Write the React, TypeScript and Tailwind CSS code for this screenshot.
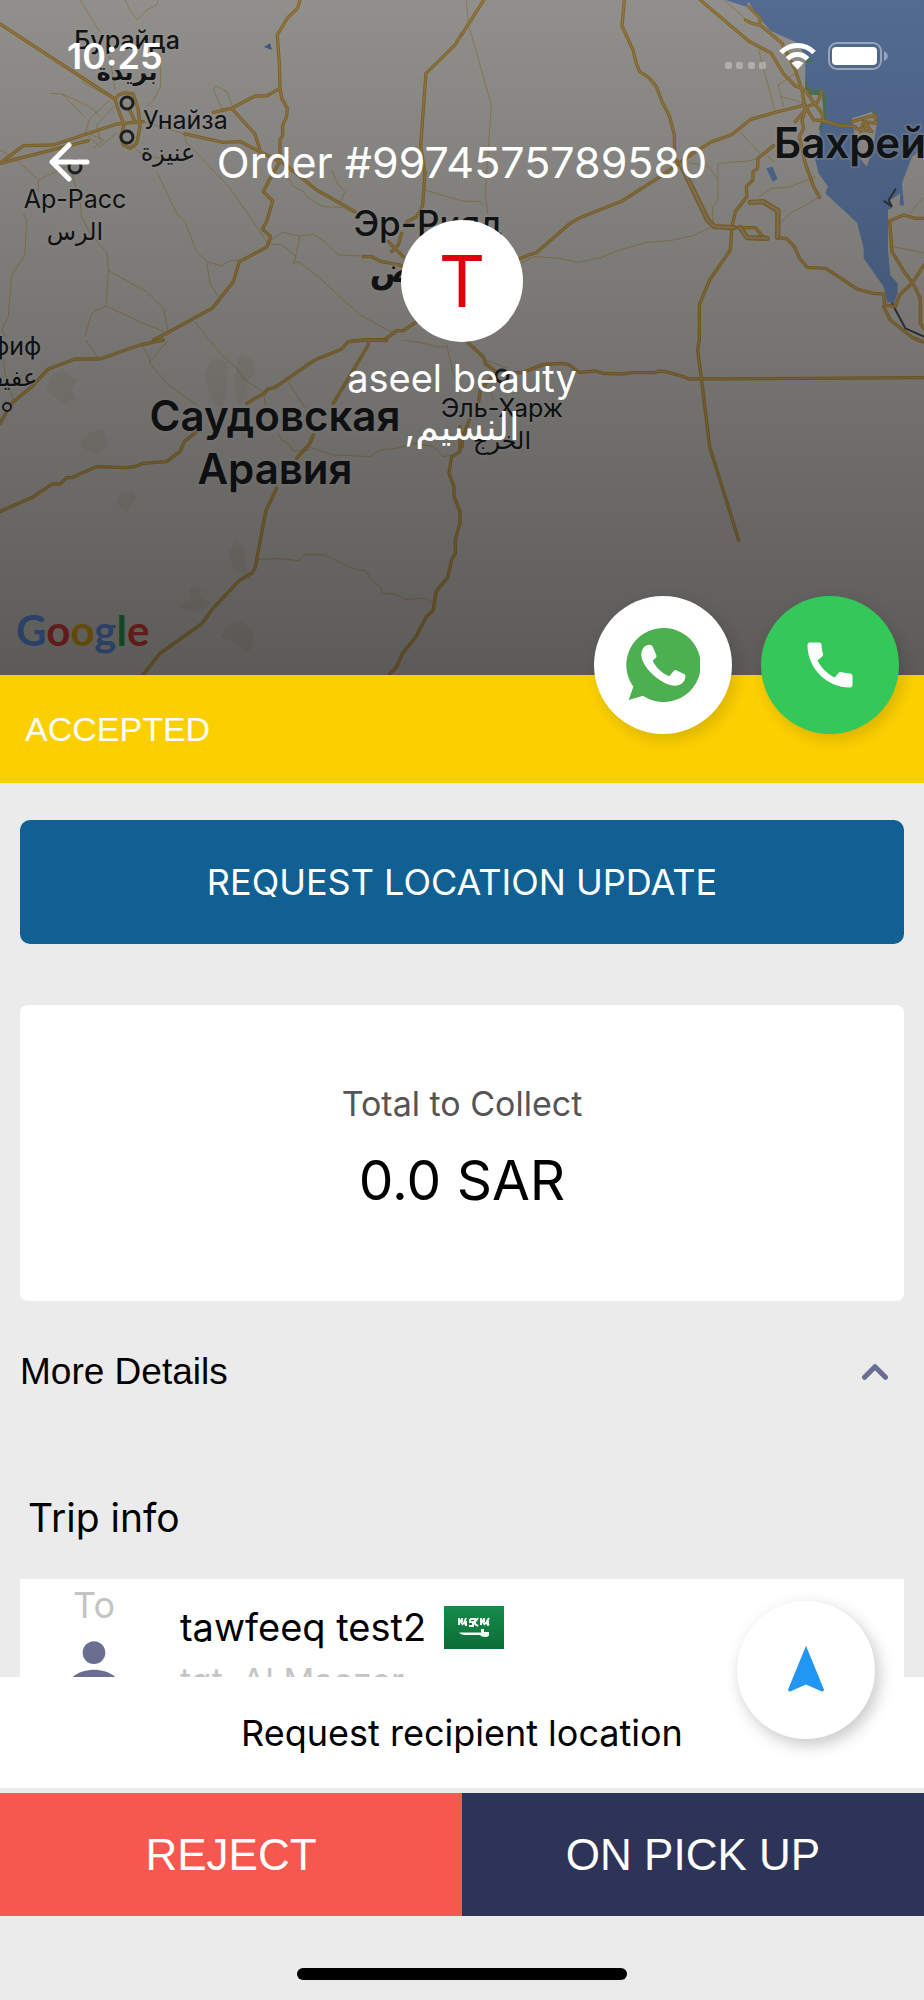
import { ChevronUp } from 'lucide-react';
import { MdCall, MdNavigation, MdPerson } from 'react-icons/md';

type Tile = { x: number; y: number; major: string[]; minor: string[] };

// Road geometry is stored per map tile, three units to a pixel.
const tiles: Tile[] = [
  {
    x: 0,
    y: 0,
    major: [
      '0,72 345,297',
      '345,297 355,285 375,278 400,282 415,330 420,380 410,430 390,445 370,435 362,410 372,375 350,315 345,297',
      '375,300 405,365',
      '900,0 893,25 863,53 832,105 838,190 840,262 845,295 862,325 860,350 848,377 848,405 840,420 840,485 805,545 790,575 818,603 800,665 787,687 812,710 800,742 718,785 700,845 637,925 500,1000 460,1020',
      '0,490 70,437 160,435 350,372 430,365',
      '0,490 265,422',
      '555,402 670,427 722,425 780,455 850,490 950,570 1065,635',
      '640,337 695,325 765,288 800,288 840,265',
      '695,325 765,402 783,460',
      '1090,770 1115,770 1145,785 1200,795 1240,820',
      '1165,725 1210,770',
      '1175,755 1195,735 1205,700',
      '1386,100 1365,135 1278,220 1262,440 1275,520 1268,618 1250,650 1220,665',
      '1250,965 1210,992 1190,992 1155,1018 1060,1022',
    ],
    minor: [
      '240,0 300,95',
      '475,0 470,15 440,30 412,60 390,30 375,0',
      '480,155 482,260 460,300 440,320',
      '150,280 187,282 265,318 280,330 300,350',
      '187,282 255,352',
      '245,245 345,300',
      '330,300 270,355 255,400 300,440 350,400',
      '340,320 290,375 300,420',
      '0,450 45,475 115,540 115,575',
      '115,540 200,500',
      '430,365 555,402',
      '280,445 310,420 265,400',
      '215,520 240,600 245,650 270,700 322,760 325,810 318,918 275,940 255,1010',
      '70,640 80,660 75,765 35,825 25,950 5,990 20,1015',
      '325,812 440,875 490,925 505,1000 430,970 318,918',
      '470,515 530,640 555,665 590,755 620,785 630,850 655,890',
      '620,785 665,798 690,782 718,780',
      '585,965 625,1018',
      '555,402 557,425 620,490 690,565 800,725',
      '812,720 848,697 900,708 940,703 975,725 1015,765 1085,768',
      '812,733 845,733 887,770 900,708',
      '887,770 880,790 895,785 960,835 1080,945 1190,1005',
      '640,270 650,258 680,275 700,325 665,325 640,270',
      '850,510 880,560 910,575 925,595 970,620 1025,622 1065,640',
      '995,510 1015,555 1035,575 1022,605 970,585',
      '1275,570 1386,603',
      '390,430 420,460 480,475',
      '330,170 345,270',
    ],
  },
  {
    x: 462,
    y: 0,
    major: [
      '65,0 0,103',
      '487,0 480,78 513,150 523,190 533,215 560,232 583,260 600,305 622,347 637,405 638,475 660,500',
      '715,0 860,123 928,160 965,222 1000,258 1030,270 1050,300 1080,340 1085,365',
      '860,20 895,55 893,75 870,70 850,60',
      '895,75 960,130 1000,210 1020,270 1030,330 1020,360 1025,385 1012,410 1030,490 1055,560 1073,592',
      '1030,315 940,337 867,358 808,405 750,425 700,455 650,490 595,530 480,603 350,655 322,672 223,758 200,765 170,778',
      '1030,320 1055,360 1085,362 1130,376 1180,380',
      '1080,272 1068,305 1040,318 1000,365',
      '1170,365 1240,345 1242,370 1205,365 1195,395 1215,375 1230,395 1180,385',
      '935,437 888,475 887,505 873,515 873,540 853,560 855,590 820,635 810,680 805,750 743,840 712,915 712,1020',
      '947,712 975,717 997,740 1013,775 1035,802 1092,805 1187,868 1235,880 1265,882 1268,915 1300,920 1313,885 1350,850 1386,795',
      '815,683 880,683 905,712',
      '1386,655 1360,655 1325,645 1283,663 1290,755 1330,820 1353,850 1375,895 1375,970 1386,985',
      '1265,920 1285,960 1350,1012 1380,1025',
    ],
    minor: [
      '13,0 20,75 88,315 70,580 77,640',
      '0,603 55,605 65,615',
      '175,790 215,770 290,775 350,787 420,772 465,752 555,727 625,722 690,708 745,683',
      '752,675 752,620 768,600 768,540 740,500 680,488',
      '768,540 768,490 860,483 890,475',
      '785,0 850,55',
      '890,150 938,330',
      '1000,220 948,255 965,320',
      '960,290 1030,310',
      '835,395 870,435 895,460',
      '890,590 930,565 980,562 1060,530',
      '955,670 985,640 1075,590',
      '1290,740 1386,758',
      '1386,590 1345,640',
      '915,465 935,485',
    ],
  },
  {
    x: 0,
    y: 340,
    major: [
      '490,0 420,15 300,57 225,57 145,87 95,140 35,190 0,250',
      '0,515 100,470 157,432 180,432 200,413 215,413 288,380 380,383 405,380 430,370 500,365 540,335 553,305 590,275',
      '740,190 793,160 803,148 825,142 945,60 1025,27 1045,5 1100,0 1160,2',
      '1105,0 1105,15 1000,190',
      '940,285 930,310 890,355',
      '830,445 798,512 765,685 755,700 720,720 635,810 605,852 480,940 430,1003',
      '1380,260 1380,335 1355,350 1347,400 1362,440 1362,468 1380,515 1380,550 1366,600 1366,640 1355,660 1343,713 1308,755 1300,810 1280,830 1245,895 1208,940 1190,980 1168,1003',
    ],
    minor: [
      '425,15 445,45 450,70 500,130 590,195',
      '450,65 505,0',
      '258,0 292,52',
      '10,55 15,100 40,180',
      '628,0 665,45 710,85 735,120 790,155 797,200',
      '865,125 915,205',
      '930,322 1000,345 1110,350 1140,330 1190,325 1240,310 1300,320 1330,350 1355,345',
      '835,280 845,300 865,310 880,333 930,330',
      '775,658 840,656 895,662 915,643 975,645 1055,685 1095,692 1118,722 1145,745 1145,760 1185,762 1215,778 1275,775 1300,790',
      '1210,0 1270,10 1310,20 1340,20',
      '1340,15 1360,100 1380,160',
    ],
  },
  {
    x: 462,
    y: 340,
    major: [
      '15,5 65,52 70,70 105,98 180,98 245,73 300,70 322,75 352,97 400,93 425,100 480,102 510,98 580,98 590,93 610,95 665,110 680,117 1386,113',
      '712,0 707,30 720,130 743,320 830,600',
      '90,110 55,150 50,185',
      '22,240 3,290 0,320',
      '1360,-4 1386,6',
    ],
    minor: ['70,60 135,85', '90,110 88,165 95,185'],
  },
];

const highways = ['655,490 737,660 757,680 815,683', '865,607 903,605 948,632 947,712', '835,683 855,713 915,715'];

const terrain = [
  '185,85 230,120 215,150 228,175 190,195 140,150 150,110',
  '310,265 322,320 290,345 238,318 262,280',
  '395,450 410,470 378,518 348,485 365,455',
  '640,55 685,65 680,150 665,220 630,170 612,100',
  '725,40 760,60 765,100 740,130 745,170 715,195 702,130 712,60',
  '710,600 735,630 738,680 755,725 700,680 685,640',
  '570,740 605,745 600,765 632,790 600,815 545,808 540,790 570,780',
  '690,850 730,845 760,880 755,925 740,938 700,905 662,890',
];

type Label = { text: string; x: number; y: number; anchor?: 'start' | 'middle' | 'end'; cls: string };

const town = 'text-[25px] font-normal';
const townArabic = 'text-[24px] font-normal';
const labels: Label[] = [
  { text: 'Бурайда', x: 127, y: 49, anchor: 'middle', cls: 'text-[25px] font-medium' },
  { text: 'بريدة', x: 127, y: 80, anchor: 'middle', cls: 'text-[24px] font-bold' },
  { text: 'Унайза', x: 143, y: 129, cls: town },
  { text: 'عنيزة', x: 168, y: 161, anchor: 'middle', cls: townArabic },
  { text: 'Ар-Расс', x: 75, y: 208, anchor: 'middle', cls: town },
  { text: 'الرس', x: 75, y: 240, anchor: 'middle', cls: townArabic },
  { text: 'Эр-Рияд', x: 428, y: 236, anchor: 'middle', cls: 'text-[35px] font-medium' },
  { text: 'الرياض', x: 428, y: 282, anchor: 'middle', cls: 'text-[34px] font-bold' },
  { text: 'Бахрейн', x: 774, y: 158, cls: 'text-[42px] font-semibold' },
  { text: 'Саудовская', x: 275, y: 431, anchor: 'middle', cls: 'text-[42px] font-semibold' },
  { text: 'Аравия', x: 275, y: 484, anchor: 'middle', cls: 'text-[42px] font-semibold' },
  { text: 'Эль-Харж', x: 502, y: 417, anchor: 'middle', cls: town },
  { text: 'الخرج', x: 502, y: 449, anchor: 'middle', cls: townArabic },
  { text: 'Афиф', x: 8, y: 355, anchor: 'middle', cls: town },
  { text: 'عفيف', x: 8, y: 386, anchor: 'middle', cls: townArabic },
];

const places = [
  [127, 103, 6],
  [127, 137, 6],
  [75, 167, 6],
  [502, 376, 6],
  [7, 407, 4],
];

const logo = [
  ['G', 'fill-[#6ba4ff]'],
  ['o', 'fill-[#f5483e]'],
  ['o', 'fill-[#f9bb0f]'],
  ['g', 'fill-[#6ba4ff]'],
  ['l', 'fill-[#34b058]'],
  ['e', 'fill-[#f5483e]'],
];

function MapBackdrop() {
  return (
    <svg viewBox="0 0 924 675" preserveAspectRatio="xMidYMid slice" className="absolute inset-0 size-full" aria-label="Map">
      <rect width="924" height="675" fill="#f2efe9" />
      <g transform="translate(462 0) scale(0.3333)">
        <path
          fill="#8ab2f2"
          d="M790 0 853 20 860 5 885 45 925 92 1000 125 1030 165 1030 265 1088 285 1093 345 1075 390 1060 480 1070 520 1098 560 1090 580 1185 668 1205 745 1205 775 1265 860 1275 905 1295 912 1307 880 1307 850 1285 825 1278 750 1278 630 1290 625 1285 600 1315 580 1313 615 1326 617 1320 550 1350 470 1390 440V0Z"
        />
        <path fill="#8ab2f2" d="M913 505 932 500 947 537 932 545Z" />
        <path fill="#7fc08e" d="M1030 235 1045 268 1075 270 1093 290 1093 350 1075 395 1070 385 1085 345 1080 285 1045 285 1030 275ZM1035 175 1058 185 1032 190ZM1228 325 1240 345 1220 345Z" />
        <path fill="#f2efe9" d="M1170 355 1230 335 1245 370 1235 430 1215 500 1190 470 1180 420ZM1025 385 1070 395 1050 440ZM1058 540 1098 560 1080 570Z" />
        <path fill="none" stroke="#55585e" strokeWidth="6" d="M1302 566 1280 600 1290 620 1265 602M1290 910 1330 985 1386 1010" />
      </g>
      <g transform="translate(0 340) scale(0.3333)" fill="#e8e5da">
        {terrain.map((t) => (
          <polygon key={t} points={t} />
        ))}
      </g>
      <path fill="#6d98de" d="M264 47 270 43 272 50Z" />
      {tiles.map((t) => (
        <g key={`${t.x}-${t.y}`} transform={`translate(${t.x} ${t.y}) scale(0.3333)`} fill="none" strokeLinejoin="round">
          {t.minor.map((p) => (
            <polyline key={p} points={p} stroke="#dcae54" strokeOpacity="0.6" strokeWidth="3" />
          ))}
          {t.major.map((p) => (
            <polyline key={p} points={p} stroke="#dfa93c" strokeWidth="10" strokeLinecap="round" />
          ))}
          {t.major.map((p) => (
            <polyline key={p} points={p} stroke="#e9c888" strokeWidth="4" strokeLinecap="round" />
          ))}
        </g>
      ))}
      <g transform="translate(462 0) scale(0.3333)" fill="none" strokeLinejoin="round" strokeLinecap="round">
        {highways.map((p) => (
          <polyline key={p} points={p} stroke="#dfa93c" strokeWidth="16" />
        ))}
        {highways.map((p) => (
          <polyline key={p} points={p} stroke="#e3cc9a" strokeWidth="8" />
        ))}
      </g>
      <g fill="#f2efe9" stroke="#33363b" strokeWidth="3">
        {places.map(([cx, cy, r]) => (
          <circle key={`${cx}-${cy}`} cx={cx} cy={cy} r={r} strokeWidth={r > 4 ? 3 : 2} />
        ))}
      </g>
      <g fill="#202226" stroke="#ffffff" strokeOpacity="0.35" strokeWidth="4" paintOrder="stroke" strokeLinejoin="round">
        {labels.map((l) => (
          <text key={l.text} x={l.x} y={l.y} textAnchor={l.anchor ?? 'start'} className={l.cls}>
            {l.text}
          </text>
        ))}
      </g>
      <text x="16" y="646" className="font-['Lato'] text-[42px] font-bold">
        {logo.map(([ch, cls], i) => (
          <tspan key={i} className={cls}>
            {ch}
          </tspan>
        ))}
      </text>
    </svg>
  );
}

function StatusBar() {
  return (
    <div className="flex h-[112px] items-center justify-between pr-9 pl-[67px]">
      <time className="text-[36px] font-semibold">10:25</time>
      <div className="flex items-center gap-3">
        <svg viewBox="0 0 42 28" className="h-7 w-[42px] fill-white/30" aria-label="No signal">
          <rect x="0" y="20" width="7" height="7" rx="2" />
          <rect x="11" y="20" width="7" height="7" rx="2" />
          <rect x="23" y="20" width="7" height="7" rx="2" />
          <rect x="34" y="20" width="7" height="7" rx="2" />
        </svg>
        <svg viewBox="0 0 37 28" className="h-7 w-[37px]" fill="none" stroke="white" strokeWidth="5" aria-label="Wi-Fi">
          <path d="M2 10.500C11 1 26 1 35 10.500" />
          <path d="M8.500 17C14 11 23 11 28.500 17" />
          <path d="M18.500 27.500 12.500 21.200C16 17.800 21 17.800 24.500 21.200Z" fill="white" stroke="none" />
        </svg>
        <svg viewBox="0 0 60 28" className="h-7 w-[60px]" aria-label="Battery">
          <rect x="1" y="1" width="52" height="26" rx="8" fill="none" stroke="white" strokeOpacity="0.4" strokeWidth="2" />
          <rect x="4" y="5" width="45" height="18" rx="4" fill="white" />
          <path d="M56 9C61 11 61 17 56 19Z" fill="white" fillOpacity="0.4" />
        </svg>
      </div>
    </div>
  );
}

function WhatsAppIcon() {
  return (
    <svg viewBox="197 174 222 222" className="size-[74px]" aria-hidden="true">
      <path fill="#4caf50" d="M308 174A111 111 0 1 1 248 377L205 390 219 350A111 111 0 0 1 308 174Z" />
      <path
        fill="white"
        d="M243 254C243 236 254 224 268 224C274 224 276 227 278 232L288 256C290 262 286 264 277 272C284 288 304 310 327 319L340 303C343 299 347 300 351 302L371 312C376 314 376 317 375 322C373 337 361 347 345 347C305 347 243 292 243 254Z"
      />
    </svg>
  );
}

function SaudiFlag() {
  return (
    <svg viewBox="0 0 60 43" className="h-[43px] w-[60px] shrink-0" aria-label="Saudi Arabia">
      <defs>
        <linearGradient id="flag" x1="0" y1="0" x2="0" y2="1">
          <stop offset="0" stopColor="#158c4a" />
          <stop offset="1" stopColor="#0b6c36" />
        </linearGradient>
      </defs>
      <rect width="60" height="43" fill="url(#flag)" />
      <path
        fill="none"
        stroke="#f2faf5"
        strokeWidth="2"
        d="M15 12v7M15 13l4 6M18 12v4M22 12l-2 5 3 2M22 15v5M26 13h4M26 13v3h3v4h-4M31 12v6l3 2M34 12l-3 4M37 12v7M37 13l4 6M40 12v4M45 12l-3 5 3 2M44 15v5"
      />
      <path fill="#f2faf5" d="M15 26.500H37V23H40V26H45V29C45 30.500 43 31 41 31C38 31 37 30 36 29H21C18 29 16 28 15 26.500Z" />
    </svg>
  );
}

function OrderHeader() {
  return (
    <header className="relative h-[675px] shrink-0 text-white">
      <MapBackdrop />
      <div className="absolute inset-0 bg-linear-to-b from-black/40 to-black/62" />
      <div className="relative">
        <StatusBar />
        <div className="grid grid-cols-[96px_1fr_96px] items-center">
          <button type="button" aria-label="Back" className="flex h-[100px] items-center pl-12">
            <svg viewBox="0 0 42 40" className="h-10 w-[42px]" fill="none" stroke="white" strokeWidth="5" strokeLinecap="round" strokeLinejoin="round">
              <path d="M39 20H4M21 3 4 20 21 37" />
            </svg>
          </button>
          <h1 className="text-center text-[43px] leading-[60px] font-normal">Order #9974575789580</h1>
        </div>
        <div className="mt-2 flex flex-col items-center">
          <div className="flex size-[122px] items-center justify-center rounded-full bg-white text-[72px] leading-none font-normal text-[#df000d]">T</div>
          <p className="mt-3 text-[38px] leading-[48px]">aseel beauty</p>
          <p dir="rtl" className="text-[38px] leading-[48px]">
            النسيم,
          </p>
        </div>
      </div>
      <div className="absolute right-[25px] -bottom-[59px] z-10 flex gap-[29px]">
        <button type="button" aria-label="WhatsApp" className="flex size-[138px] items-center justify-center rounded-full bg-white shadow-[4px_6px_16px_rgba(0,0,0,0.14)]">
          <WhatsAppIcon />
        </button>
        <button type="button" aria-label="Call" className="flex size-[138px] items-center justify-center rounded-full bg-[#34c759] text-white shadow-[4px_6px_16px_rgba(0,0,0,0.14)]">
          <MdCall size={60} />
        </button>
      </div>
    </header>
  );
}

export default function App() {
  return (
    <div className="flex h-screen flex-col bg-[#ebebeb] font-['Inter','DejaVu_Sans',sans-serif] text-black">
      <OrderHeader />
      <p className="flex h-[108px] shrink-0 items-center bg-[#fcd000] px-[25px] font-['Liberation_Sans',sans-serif] text-[34px] text-white">ACCEPTED</p>

      <main className="min-h-0 flex-1 overflow-hidden px-5 pt-[37px]">
        <button type="button" className="h-[124px] w-full rounded-[10px] bg-[#106093] text-[36px] font-normal text-white">
          REQUEST LOCATION UPDATE
        </button>
        <section className="mt-[61px] flex h-[296px] flex-col items-center rounded-lg bg-white pt-[77px]">
          <h2 className="text-[34px] leading-[44px] text-[#555555]">Total to Collect</h2>
          <p className="mt-[18px] text-[55px] leading-[72px]">0.0 SAR</p>
        </section>
        <button type="button" aria-expanded="true" className="mt-[37px] flex h-[68px] w-full items-center justify-between pr-2 font-['Liberation_Sans',sans-serif] text-[37px]">
          More Details
          <ChevronUp size={42} strokeWidth={3} className="text-[#6b6e90]" />
        </button>
        <h2 className="mt-[86px] px-2 text-[39px] leading-[52px]">Trip info</h2>
        <section className="mt-[35px] flex bg-white">
          <div className="flex w-[148px] flex-col items-center pt-1 text-[#c4c4c4]">
            <span className="text-[36px] leading-[44px]">To</span>
            <MdPerson size={68} className="mt-[3px] text-[#6b6e90]" />
          </div>
          <div className="pt-6 pl-3">
            <div className="flex items-center gap-[18px]">
              <span className="text-[38px] leading-[48px]">tawfeeq test2</span>
              <SaudiFlag />
            </div>
            <p className="mt-2 text-[34px] leading-[44px] text-[#c4c4c4]">tgt, Al Maozer</p>
          </div>
        </section>
      </main>

      <footer className="relative shrink-0">
        <button type="button" className="h-[111px] w-full bg-white text-[36px]">
          Request recipient location
        </button>
        <button type="button" aria-label="Navigate" className="absolute -top-[76px] right-[49px] flex size-[138px] items-center justify-center rounded-full bg-white text-[#2196f3] shadow-[4px_6px_16px_rgba(0,0,0,0.22)]">
          <MdNavigation size={58} />
        </button>
        <div className="mt-[5px] grid grid-cols-2 font-['Liberation_Sans',sans-serif] text-[44px] text-white">
          <button type="button" className="h-[123px] bg-[#f6574e]">
            REJECT
          </button>
          <button type="button" className="h-[123px] bg-[#2e3358]">
            ON PICK UP
          </button>
        </div>
        <div className="flex h-[84px] items-end justify-center pb-5">
          <div className="h-3 w-[330px] rounded-full bg-black" />
        </div>
      </footer>
    </div>
  );
}
